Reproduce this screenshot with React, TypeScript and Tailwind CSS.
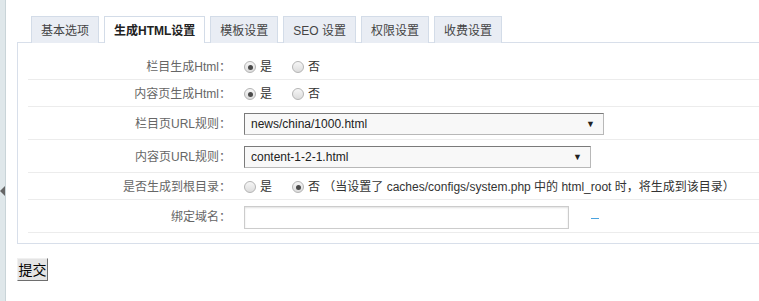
const font = "font-['Liberation_Sans','Noto_Sans_CJK_SC',sans-serif]";

const tabs = ["基本选项", "生成HTML设置", "模板设置", "SEO 设置", "权限设置", "收费设置"];

function Dot({ checked }: { checked?: boolean }) {
  return (
    <span className="flex h-[12px] w-[12px] items-center justify-center rounded-full border border-[#b4b4b4] bg-[linear-gradient(#f6f6f6,#dcdcdc)]">
      {checked && <span className="h-[5px] w-[5px] rounded-full bg-[#4a4a4a]" />}
    </span>
  );
}

function Radio({ checked, label }: { checked?: boolean; label: string }) {
  return (
    <label className="mr-[20px] flex items-center">
      <Dot checked={checked} />
      <span className="ml-[4px] text-[#333]">{label}</span>
    </label>
  );
}

function Row({
  label,
  tall,
  children,
}: {
  label: string;
  tall?: boolean;
  children: React.ReactNode;
}) {
  return (
    <div className={`flex items-center border-b border-[#ececec] pt-[2px] ${tall ? "h-[33px]" : "h-[27px]"}`}>
      <div className="w-[207px] shrink-0 pr-[4px] text-right text-[#666]">{label}</div>
      <div className="flex items-center pl-[9px]">{children}</div>
    </div>
  );
}

function Select({ value, width }: { value: string; width: string }) {
  return (
    <div
      className={`flex h-[22px] items-center justify-between border border-t-[#7a7a7a] border-l-[#7a7a7a] border-r-[#b8b8b8] border-b-[#b8b8b8] bg-[#f8f8f8] pl-[6px] pr-[8px] text-[12px] text-[#222] ${width}`}
    >
      <span>{value}</span>
      <span className="text-[9px] text-[#222]">▼</span>
    </div>
  );
}

export default function App() {
  return (
    <div className={`relative flex h-[301px] w-full overflow-hidden bg-white text-[12px] leading-[16px] ${font}`}>
      <div className="relative w-[6px] shrink-0 border-r border-[#c9d4d8] bg-[#dfe7ea]">
        <span className="absolute left-0 top-[186px] h-0 w-0 border-y-[5px] border-r-[5px] border-y-transparent border-r-[#666]" />
      </div>
      <div className="flex-1 pl-[11px] pt-[16px]">
        <div className="flex pl-[14px]">
          {tabs.map((t, i) => (
            <div
              key={t}
              className={`mr-[5px] flex h-[27px] items-center border border-b-0 border-[#d3dce8] px-[9px] pt-[1px] text-[12px] ${
                i === 1 ? "relative z-10 bg-white font-bold text-[#222]" : "bg-[#e9edf4] text-[#444]"
              }`}
            >
              {t}
            </div>
          ))}
        </div>
        <div className="-mt-px w-[800px] border border-[#d8dfea] pb-[10px] pl-[10px] pt-[10px]">
          <Row label="栏目生成Html：">
            <Radio checked label="是" />
            <Radio label="否" />
          </Row>
          <Row label="内容页生成Html：">
            <Radio checked label="是" />
            <Radio label="否" />
          </Row>
          <Row label="栏目页URL规则：" tall>
            <Select value="news/china/1000.html" width="w-[360px]" />
          </Row>
          <Row label="内容页URL规则：" tall>
            <Select value="content-1-2-1.html" width="w-[347px]" />
          </Row>
          <Row label="是否生成到根目录：">
            <Radio label="是" />
            <label className="flex items-center">
              <Dot checked />
              <span className="ml-[4px] text-[#333]">
                否 （当设置了 caches/configs/system.php 中的 html_root 时，将生成到该目录）
              </span>
            </label>
          </Row>
          <Row label="绑定域名：" tall>
            <input
              className="h-[23px] w-[325px] border border-[#cccccc] bg-white shadow-[inset_0_1px_2px_rgba(0,0,0,0.12)] outline-none"
              readOnly
            />
            <span className="ml-[22px] mt-[2px] h-[1px] w-[8px] bg-[#4aa3df]" />
          </Row>
        </div>
        <button className="mt-[14px] h-[23px] w-[31px] border border-t-[#f0f0f0] border-l-[#f0f0f0] border-r-[#6e6e6e] border-b-[#6e6e6e] bg-[#e4e4e4] text-[14px] leading-none text-black">
          提交
        </button>
      </div>
    </div>
  );
}
